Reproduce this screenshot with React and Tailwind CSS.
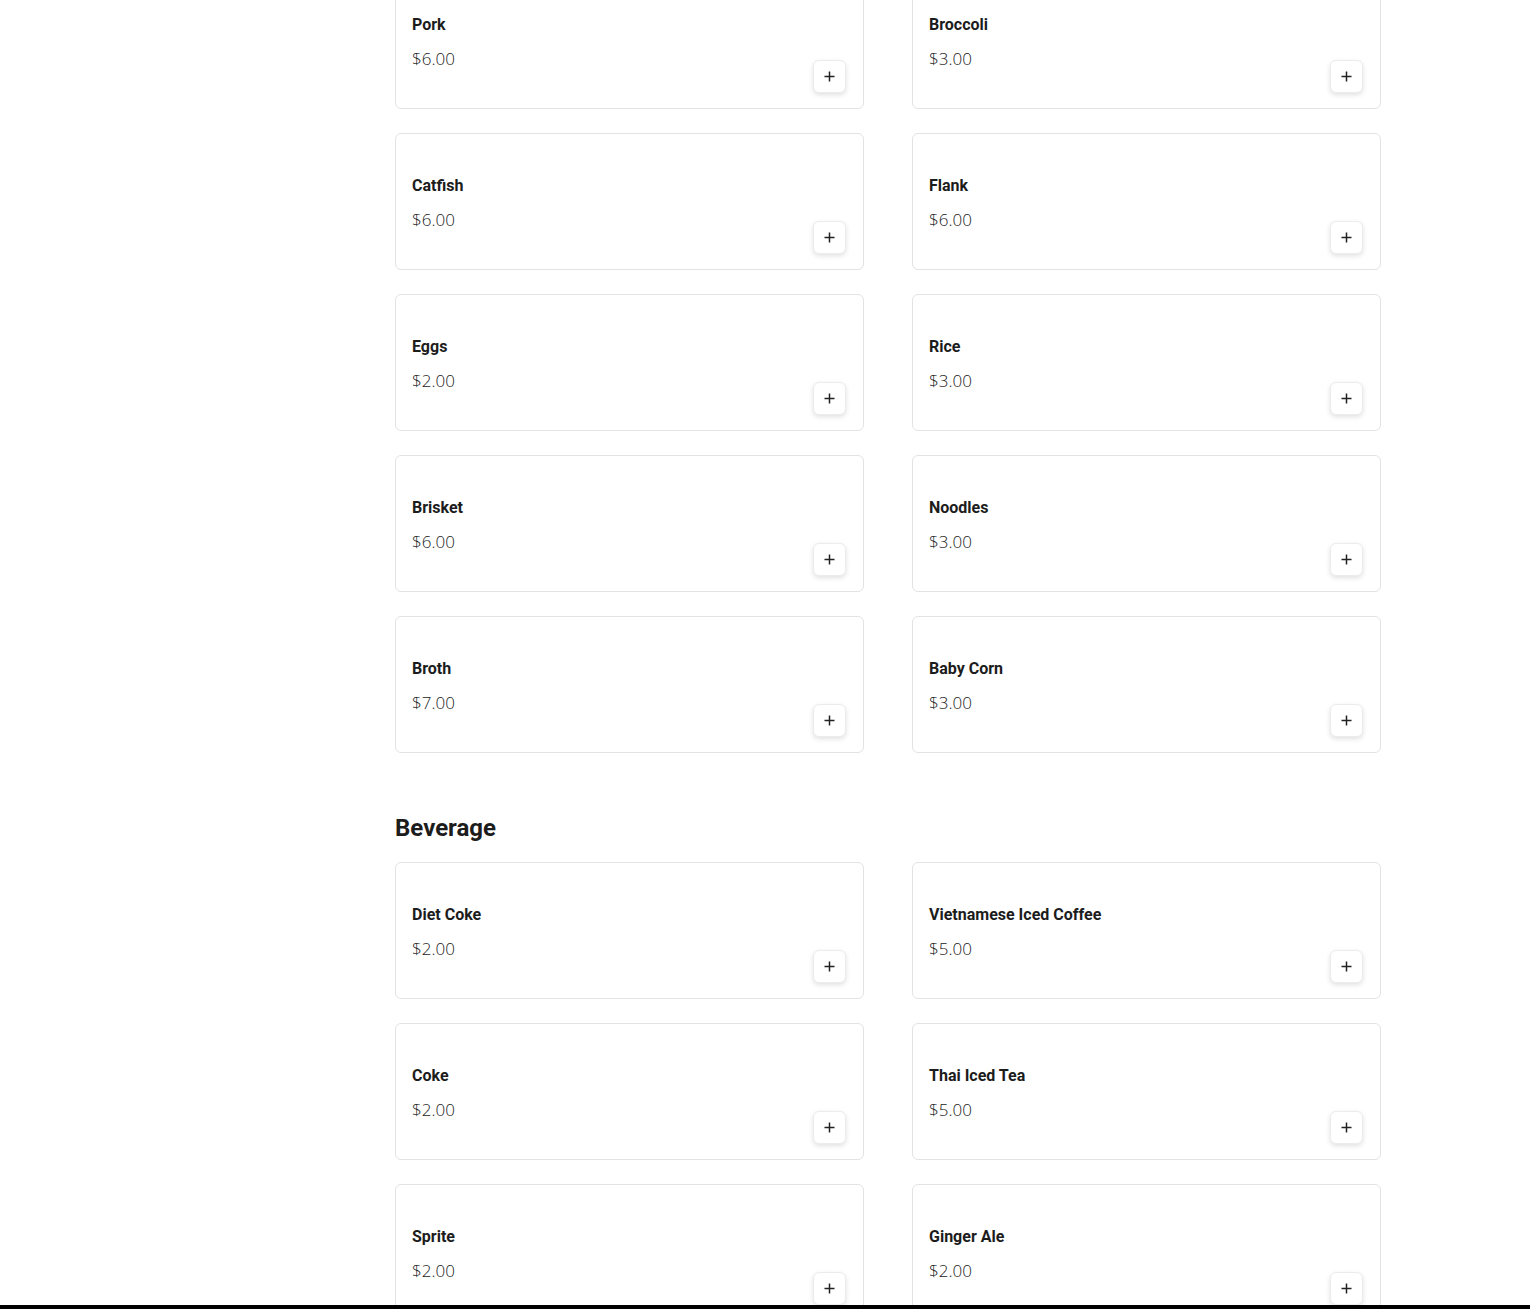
const meat = [
  ['Pork', '$6.00'],
  ['Broccoli', '$3.00'],
  ['Catfish', '$6.00'],
  ['Flank', '$6.00'],
  ['Eggs', '$2.00'],
  ['Rice', '$3.00'],
  ['Brisket', '$6.00'],
  ['Noodles', '$3.00'],
  ['Broth', '$7.00'],
  ['Baby Corn', '$3.00'],
]

const drinks = [
  ['Diet Coke', '$2.00'],
  ['Vietnamese Iced Coffee', '$5.00'],
  ['Coke', '$2.00'],
  ['Thai Iced Tea', '$5.00'],
  ['Sprite', '$2.00'],
  ['Ginger Ale', '$2.00'],
]

function ItemCard({ name, price }) {
  return (
    <div className="flex h-[137px] justify-between rounded-md border border-[#e3e3e3] bg-white pl-4 pr-[17px] pb-[15px]">
      <div className="pt-[40px]">
        <h3 className="font-['Roboto',sans-serif] text-base font-bold leading-6 text-[#1c1c1c]">{name}</h3>
        <p className="mt-[10px] font-['Open_Sans',sans-serif] text-[17px] font-light leading-6 text-[#222]">{price}</p>
      </div>
      <button className="flex h-[33px] w-[33px] items-center justify-center self-end rounded-md border border-[#ececec] bg-white shadow-[0_2px_5px_rgba(0,0,0,0.12)]">
        <svg width="11" height="11" viewBox="0 0 11 11" fill="none" stroke="#222" strokeWidth="1.5">
          <path d="M5.5 0.5v10M0.5 5.5h10" />
        </svg>
      </button>
    </div>
  )
}

function Grid({ items }) {
  return (
    <div className="grid grid-cols-2 gap-x-12 gap-y-6">
      {items.map(([name, price]) => (
        <ItemCard key={name} name={name} price={price} />
      ))}
    </div>
  )
}

export default function App() {
  return (
    <div className="h-screen overflow-hidden bg-white">
      <div className="ml-[395px] mt-[-28px] w-[986px]">
        <Grid items={meat} />
        <h2 className="mt-[59px] mb-[18px] font-['Roboto',sans-serif] text-2xl font-bold leading-8 text-[#1c1c1c]">Beverage</h2>
        <Grid items={drinks} />
      </div>
      <div className="fixed bottom-0 left-0 h-1 w-full bg-black" />
    </div>
  )
}
